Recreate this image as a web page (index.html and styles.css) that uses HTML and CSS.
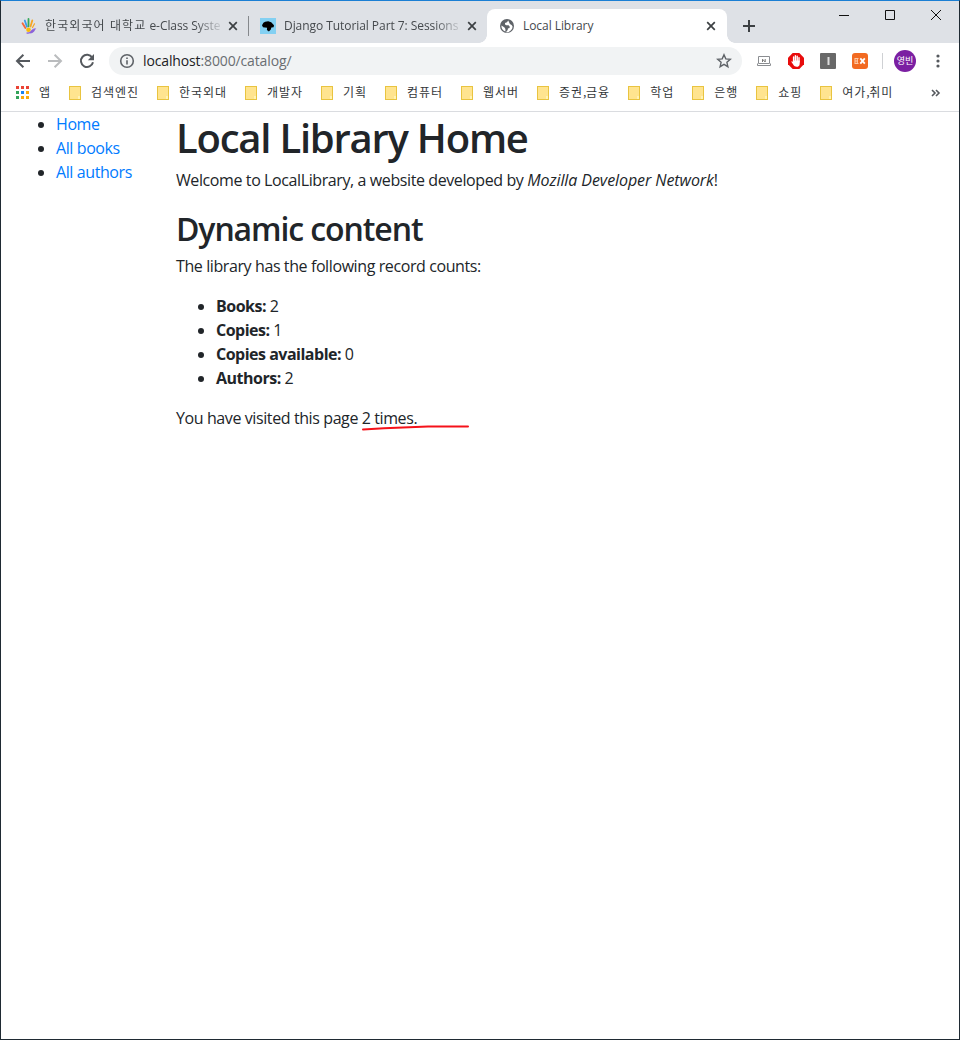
FILE: index.html
```html
<!DOCTYPE html>
<html lang="ko">
<head>
<meta charset="utf-8">
<title>Local Library</title>
<link rel="stylesheet" href="styles.css">
</head>
<body>
<div class="window">
  <header class="tabstrip">
    <div class="tab tab-first">
      <svg class="favicon" viewBox="0 0 16 16" fill="none" stroke-linecap="round" stroke-width="1.8">
        <path d="M1.5 5.2 4.4 10" stroke="#f4693b"/><path d="M3.8 2.5 5.9 8.6" stroke="#3f9be8"/><path d="M7.5 1v7.3" stroke="#37a85a"/><path d="M11.3 2.4 9.5 8.5" stroke="#f6a623"/><path d="M13.5 5.8 11.5 9.5" stroke="#f6a623" stroke-width="1.2"/>
        <circle cx="7.5" cy="11.8" r="2.3" fill="#fbbc05"/><path d="M6 15.1c4 .5 3.2-3.9 8.5-4.4-1.3.9-.7 4.2-5.6 4.4Z" fill="#8c62d8" stroke="#8c62d8" stroke-width=".8"/>
      </svg>
      <span class="tab-title fade"><span class="hangul">한국외국어 대학교</span> e-Class Syste</span>
      <svg class="close" viewBox="0 0 10 10"><path d="m1.2 1.2 7.6 7.6m0-7.6L1.2 8.8"/></svg>
    </div>
    <div class="tab tab-second">
      <svg class="favicon" viewBox="0 0 16 16"><path fill="#83d0f2" d="M0 0h16v16H0z"/><path d="M2 7.2 3.4 4.8 5.2 3.8l3-.6 3 1L14 7.2l-.4 2-2.2.3-.6 2-1.9 2-2-1.4.2-2.3-2.2-.4L3 9.2Z"/></svg>
      <span class="tab-title fade">Django Tutorial Part 7: Sessions</span>
      <svg class="close" viewBox="0 0 10 10"><path d="m1.2 1.2 7.6 7.6m0-7.6L1.2 8.8"/></svg>
    </div>
    <div class="tab tab-active">
      <svg class="favicon" viewBox="0 0 16 16"><circle cx="8" cy="8" r="7" fill="#5f6368"/><path fill="#fff" d="M9.2 2.5 8 4.2l-2 .7v1.5l1.4.8h2.2l1.2 1.5-.3 1.3-1.6.4-.2 1.7-1.3 1.4-.1 1C10.4 14.3 13.6 12 13.6 8.5l-1-1.6-1.7-.8-.7-1.5ZM2.5 7.5l3 2 .9 1.5v2.5C4.1 12.8 2.4 10.7 2.4 8Z"/></svg>
      <span class="tab-title">Local Library</span>
      <svg class="close" viewBox="0 0 10 10"><path d="m1.2 1.2 7.6 7.6m0-7.6L1.2 8.8"/></svg>
    </div>
    <svg class="new-tab" viewBox="0 0 12 12"><path d="M6 0v12M0 6h12"/></svg>
    <div class="controls">
      <svg viewBox="0 0 11 11"><path d="M0 5.5h10"/></svg>
      <svg viewBox="0 0 11 11"><path d="M.5.5h9v9h-9z"/></svg>
      <svg viewBox="0 0 11 11"><path d="m0 0 10 10m0-10L0 10"/></svg>
    </div>
  </header>

  <div class="toolbar">
    <svg class="nav-icon" viewBox="0 0 16 16"><path d="M15 8H2m6.4-6.3L2 8l6.4 6.3"/></svg>
    <svg class="nav-icon dim" viewBox="0 0 16 16"><path d="M1 8h13M7.6 1.7 14 8l-6.4 6.3"/></svg>
    <svg class="nav-icon" viewBox="0 0 16 16"><path d="M13.2 4.6A6.1 6.1 0 1 0 14 9.3"/><path d="M15 1v6.2H8.8Z" class="solid"/></svg>
    <div class="omnibox">
      <svg class="info" viewBox="0 0 16 16"><circle cx="8" cy="8" r="6.3"/><path d="M8 7.2v4.3M8 4.4V6"/></svg>
      <span class="url"><b>localhost</b>:8000/catalog/</span>
      <svg class="star" viewBox="0 0 16 16"><path d="m8 1.8 1.8 4.1 4.5.4-3.4 3 1 4.4L8 11.4l-3.9 2.3 1-4.4-3.4-3 4.5-.4Z"/></svg>
    </div>
    <div class="extensions">
      <svg viewBox="0 0 16 16"><path d="M2.5 3.5h11v7h-11zM1.5 10.5v2h13v-2" fill="none" stroke="#8a8d91"/><path d="M6.5 9V6.2L9.2 9V6" fill="none" stroke="#777"/></svg>
      <svg viewBox="0 0 16 16"><path d="M4.7 0h6.6L16 4.7v6.6L11.3 16H4.7L0 11.3V4.7Z" fill="#e80c0c"/><path d="M5.6 4v5M7.4 2.8V8M9.2 3.2V8M11 4.6V9" stroke="#fff" stroke-width="1.4" stroke-linecap="round"/><path d="M4.9 7.5h6.8v3.2c0 4-5 4-6.5.9L3.3 8.7c.3-1 1.1-.5 1.6.3Z" fill="#fff"/></svg>
      <svg viewBox="0 0 16 16"><rect width="16" height="16" rx="1" fill="#686868"/><path d="M7.5 4h2v8h-2z" fill="#ddd"/></svg>
      <svg viewBox="0 0 16 16"><rect width="16" height="16" rx="3" fill="#f26a21"/><path d="M6.5 5.5H3v5h3.5M3 8h3M5.3 5.5v5" fill="none" stroke="#ffc8a5" stroke-width="1.1"/><path d="m8.3 5.4 4.5 5.2m0-5.2-4.5 5.2" stroke="#fff" stroke-width="1.8"/></svg>
    </div>
    <span class="divider"></span>
    <span class="avatar">영빈</span>
    <svg class="menu" viewBox="0 0 4 16"><circle cx="2" cy="3" r="1.6"/><circle cx="2" cy="8" r="1.6"/><circle cx="2" cy="13" r="1.6"/></svg>
  </div>

  <nav class="bookmarks">
    <svg class="apps" viewBox="0 0 13 13"><path fill="#ea4335" d="M0 0h3v3H0zm5 0h3v3H5zm5 0h3v3h-3z"/><path fill="#34a35a" d="M0 5h3v3H0zm0 5h3v3H0z"/><path fill="#1a82f0" d="M5 5h3v3H5z"/><path fill="#fba90c" d="M10 5h3v3h-3zM5 10h3v3H5zm5 0h3v3h-3z"/></svg>
    <span class="apps-label">앱</span>
    <span class="bookmark">검색엔진</span>
    <span class="bookmark">한국외대</span>
    <span class="bookmark">개발자</span>
    <span class="bookmark">기획</span>
    <span class="bookmark">컴퓨터</span>
    <span class="bookmark">웹서버</span>
    <span class="bookmark">증권<span class="comma">,</span>금융</span>
    <span class="bookmark">학업</span>
    <span class="bookmark">은행</span>
    <span class="bookmark">쇼핑</span>
    <span class="bookmark">여가<span class="comma">,</span>취미</span>
    <svg class="more" viewBox="0 0 9 8"><path d="m1 1 3 3-3 3m4-6 3 3-3 3"/></svg>
  </nav>

  <div class="page">
    <ul class="side">
      <li><a>Home</a></li>
      <li><a>All books</a></li>
      <li><a>All authors</a></li>
    </ul>
    <main class="content">
      <h1>Local Library Home</h1>
      <p>Welcome to LocalLibrary, a website developed by <em>Mozilla Developer Network</em>!</p>
      <h2>Dynamic content</h2>
      <p>The library has the following record counts:</p>
      <ul class="counts">
        <li><strong>Books:</strong> 2</li>
        <li><strong>Copies:</strong> 1</li>
        <li><strong>Copies available:</strong> 0</li>
        <li><strong>Authors:</strong> 2</li>
      </ul>
      <p class="visits">You have visited this page 2 times.
        <svg class="mark" viewBox="0 0 108 8"><path d="M1 5.5 22 4.2 66 2.5h40"/></svg>
      </p>
    </main>
  </div>
</div>
</body>
</html>
```

FILE: styles.css
```css
*, ::before, ::after { box-sizing: border-box; }
body { margin: 0; background: #fff; font-family: "Open Sans", "Noto Sans CJK KR", sans-serif; color: #212529; }
svg { display: block; flex: none; overflow: visible; }
.window { width: 960px; height: 1040px; border: 1px solid #1f2a33; border-top-color: #1b7fd4; overflow: hidden; }

.tabstrip { height: 42px; background: #dee1e6; display: flex; }
.tab { height: 34px; margin-top: 8px; display: flex; align-items: center; font-size: 12px; color: #45494d; }
.tab-first { width: 247px; padding-left: 20px; position: relative; }
.tab-first::after { content: ""; position: absolute; right: -1px; top: 7px; width: 1px; height: 20px; background: #85888c; }
.tab-second { width: 239px; padding-left: 12px; }
.tab-active { width: 240px; padding-left: 12px; background: #fff; border-radius: 8px 8px 0 0; position: relative; }
.tab-active::before, .tab-active::after { content: ""; position: absolute; bottom: 0; width: 8px; height: 8px; }
.tab-active::before { left: -8px; background: radial-gradient(circle at 0 0, transparent 7.5px, #fff 8px); }
.tab-active::after { right: -8px; background: radial-gradient(circle at 100% 0, transparent 7.5px, #fff 8px); }
.favicon { width: 16px; height: 16px; margin-right: 8px; }
.tab-title { width: 176px; margin-right: -1px; overflow: hidden; white-space: nowrap; line-height: 20px; letter-spacing: -.06px; }
.hangul { letter-spacing: 1.1px; }
.tab-active .tab-title { width: 179px; }
.fade { mask-image: linear-gradient(90deg, #000 150px, transparent 180px); }
.close { width: 10px; height: 10px; margin-left: 8px; stroke: #3c4043; stroke-width: 1.7; fill: none; }
.tab-active .close { margin-left: 5px; }
.new-tab { width: 12px; height: 12px; margin: 19px 0 0 16px; stroke: #3c4043; stroke-width: 2; }
.controls { margin: 9px 17px 0 auto; display: flex; gap: 35px; }
.controls svg { width: 11px; height: 11px; stroke: #111; fill: none; }

.toolbar { height: 37px; display: flex; align-items: center; padding: 0 0 1px 14px; }
.nav-icon { width: 16px; height: 16px; margin-right: 16px; fill: none; stroke: #55595e; stroke-width: 2; }
.nav-icon .solid { fill: #55595e; stroke: none; }
.dim { stroke: #babcbe; }
.omnibox { width: 633px; height: 28px; margin-left: -2px; border-radius: 14px; background: #f1f3f4; display: flex; align-items: center; padding: 0 10px; }
.info { width: 16px; height: 16px; fill: none; stroke: #5f6368; stroke-width: 1.6; }
.url { font-size: 14px; line-height: 20px; letter-spacing: -.13px; color: #6a6e72; margin-left: 8px; flex: 1; }
.url b { font-weight: 400; color: #202124; }
.star { width: 16px; height: 16px; fill: none; stroke: #5f6368; stroke-width: 1.4; }
.extensions { display: flex; gap: 16px; margin-left: 14px; }
.extensions svg { width: 16px; height: 16px; }
.divider { width: 1px; height: 16px; background: #cfd1d4; margin-left: 14px; }
.avatar { width: 22px; height: 22px; margin-left: 11px; border-radius: 50%; background: #7b1fa2; color: #fff; font: 9px/21px "Noto Sans CJK KR", sans-serif; text-align: center; }
.menu { width: 4px; height: 16px; margin-left: 19.5px; fill: #55595e; }

.bookmarks { height: 32px; border-bottom: 1px solid #dadce0; padding: 0 19px 6px 15px; display: flex; align-items: center; font: 12px/20px "Noto Sans CJK KR", sans-serif; letter-spacing: .96px; color: #34373a; white-space: nowrap; }
.apps { width: 13px; height: 13px; margin-right: 10px; }
.apps-label { width: 12px; margin: -2px 18px 0 0; }
.bookmark { display: flex; align-items: center; margin: -2px 18px 0 0; }
.bookmark::before { content: ""; width: 12px; height: 14px; margin: 2px 10px 0 0; background: linear-gradient(#fff3b4, #fff3b4) 8px 9px / 2px 3px no-repeat, #ffe48f; border: 1px solid #e9c440; }
.comma { width: 3px; letter-spacing: 0; }
.more { width: 9px; height: 8px; margin-left: auto; fill: none; stroke: #55595e; stroke-width: 1.6; }

.page { display: grid; grid-template-columns: 160px 1fr; padding-left: 15px; font-size: 16px; line-height: 24px; letter-spacing: -.4px; white-space: nowrap; }
.page ul { margin: 0 0 16px; padding-left: 40px; }
.side a { color: #007bff; }
.page h1, .page h2 { margin: 0 0 8px; font-weight: 600; line-height: 1.2; position: relative; top: 2px; }
.page h1 { font-size: 40px; letter-spacing: -1.23px; }
.page h2 { font-size: 32px; letter-spacing: -1.1px; }
.page p { margin: 0 0 16px; }
.page em { letter-spacing: -.08px; }
.page strong { letter-spacing: -.5px; }
.page .visits { position: relative; }
.mark { position: absolute; left: 186px; top: 18px; width: 108px; height: 8px; fill: none; stroke: #f5121a; stroke-width: 2; stroke-linecap: round; }
```
